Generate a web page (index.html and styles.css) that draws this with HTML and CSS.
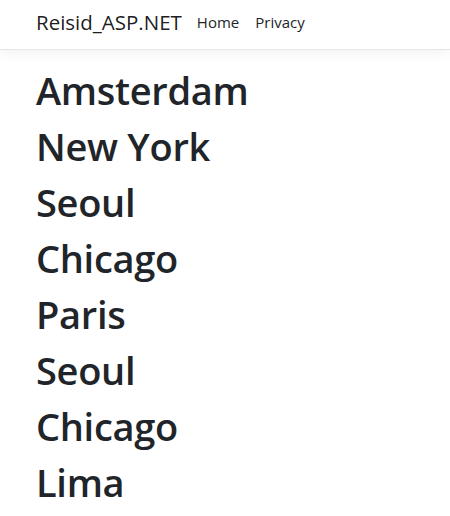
FILE: index.html
```html
<!DOCTYPE html>
<html lang="en">
<head>
<meta charset="utf-8">
<title>Reisid_ASP.NET</title>
<link rel="stylesheet" href="styles.css">
</head>
<body>
<header>
  <nav class="navbar">
    <div class="container nav-inner">
      <a class="brand" href="#">Reisid_ASP.NET</a>
      <ul class="nav-links">
        <li><a class="nav-link" href="#">Home</a></li>
        <li><a class="nav-link" href="#">Privacy</a></li>
      </ul>
    </div>
  </nav>
</header>
<main class="container">
  <h1 class="city">Amsterdam</h1>
  <h1 class="city">New York</h1>
  <h1 class="city">Seoul</h1>
  <h1 class="city">Chicago</h1>
  <h1 class="city">Paris</h1>
  <h1 class="city">Seoul</h1>
  <h1 class="city">Chicago</h1>
  <h1 class="city">Lima</h1>
</main>
</body>
</html>
```
FILE: styles.css
```css
html, body {
  margin: 0;
  padding: 0;
}
body {
  font-family: "Open Sans", "Noto Sans", sans-serif;
  color: #212529;
  background: #fff;
}
.container {
  padding: 0 36px;
}
.navbar {
  height: 50px;
  box-sizing: border-box;
  padding-bottom: 6px;
  border-bottom: 1px solid #e5e5e5;
  box-shadow: 0 .25rem .75rem rgba(0,0,0,.05);
  margin-bottom: 16px;
}
.nav-inner {
  display: flex;
  align-items: center;
  height: 100%;
}
.brand {
  font-size: 20.5px;
  color: rgba(0,0,0,.9);
  text-decoration: none;
  margin-right: 7px;
}
.nav-links {
  display: flex;
  list-style: none;
  margin: 0;
  padding: 0;
}
.nav-link {
  display: block;
  padding: 0 8px;
  font-size: 15px;
  color: #212529;
  text-decoration: none;
}
.city {
  margin: 0 0 8px;
  font-size: 38px;
  font-weight: 600;
  line-height: 48px;
  letter-spacing: -0.3px;
}
```
